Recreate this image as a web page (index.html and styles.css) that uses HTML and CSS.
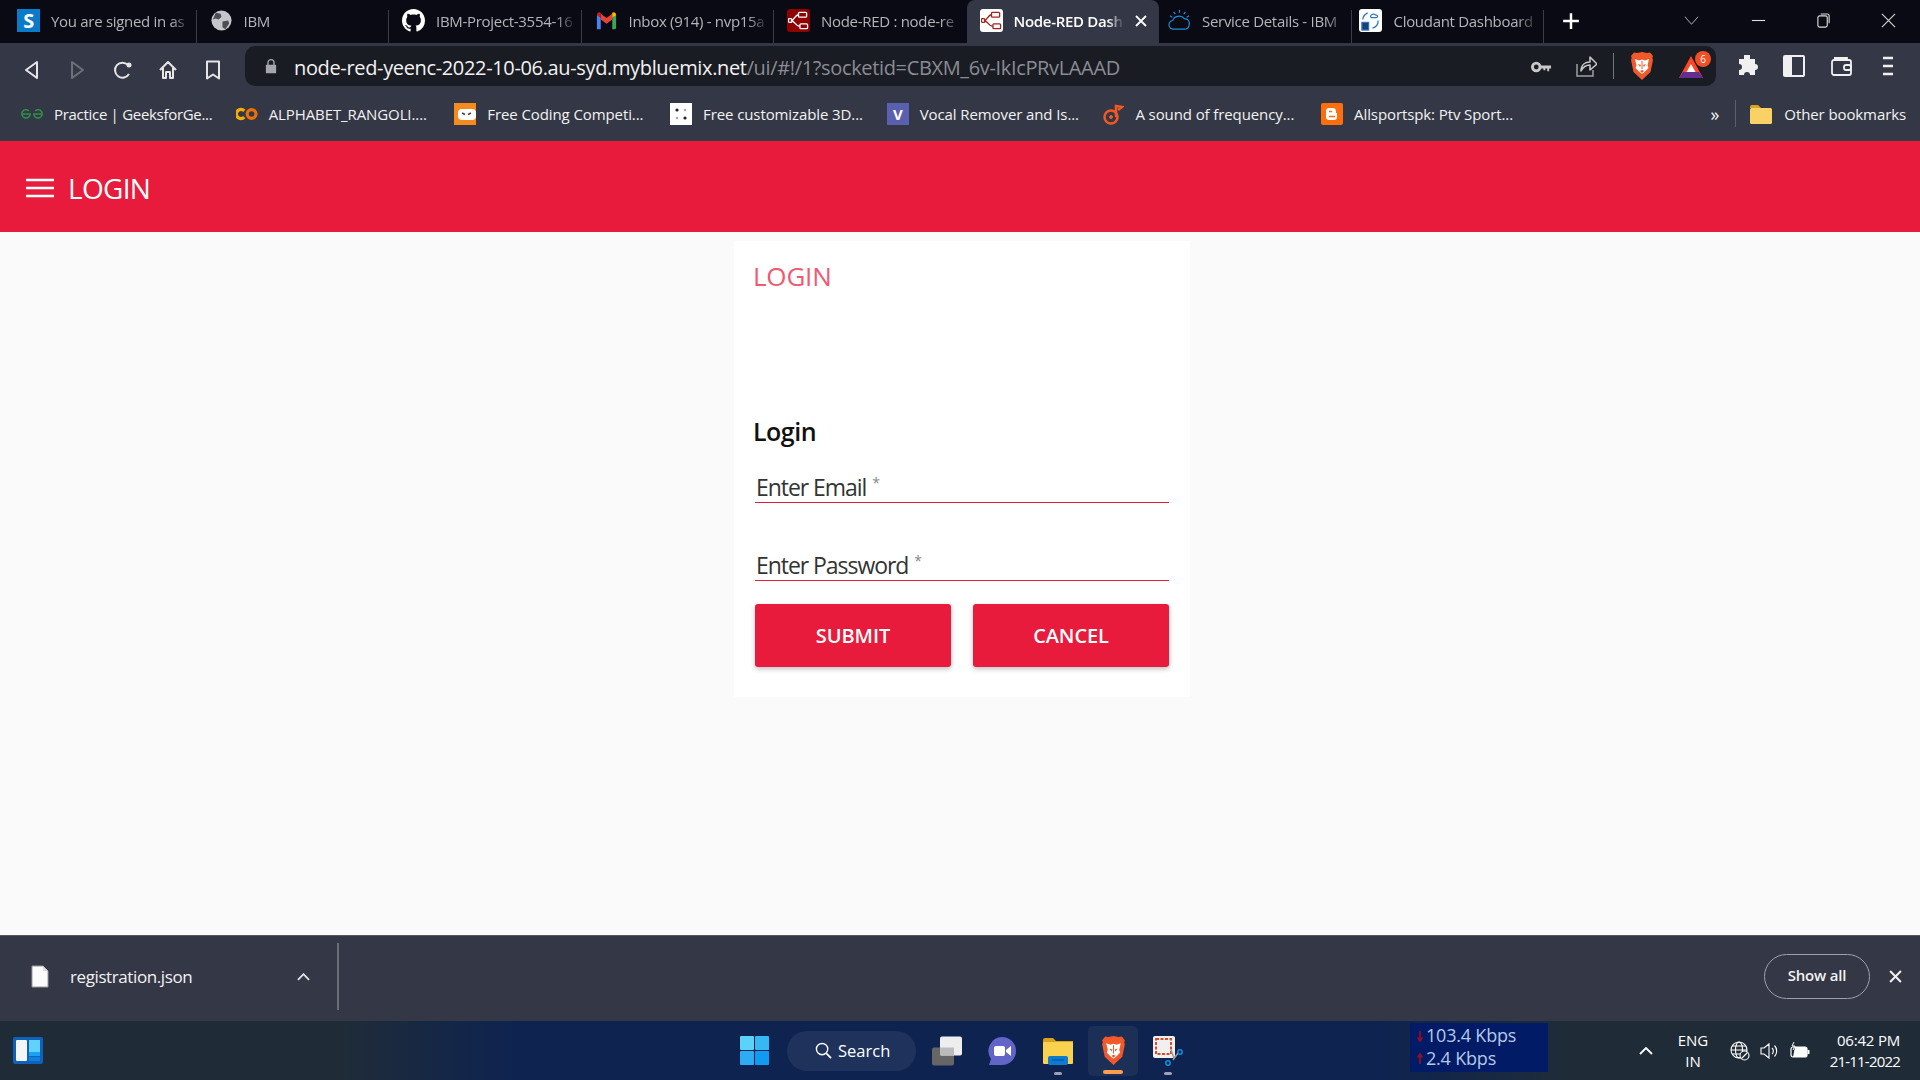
FILE: index.html

```html
<!DOCTYPE html>
<html lang="en">
<head>
<meta charset="UTF-8">
<title>Node-RED Dashboard</title>
<link rel="stylesheet" href="styles.css">
</head>
<body>

<svg class="defs" width="0" height="0">
  <symbol id="flow" viewBox="0 0 22 22">
    <path d="M3 11c4 0 4-6 8-6M3 11c4 0 5 6 9 6" fill="none" stroke="currentColor" stroke-width="1.400"/>
    <rect x="11" y="2.500" width="8.500" height="5" rx="1" fill="none" stroke="currentColor" stroke-width="1.400"/>
    <rect x="12.500" y="14.500" width="8" height="5" rx="1" fill="none" stroke="currentColor" stroke-width="1.400"/>
    <rect x="0.500" y="9" width="3.500" height="4" rx="1" fill="none" stroke="currentColor" stroke-width="1.400"/>
  </symbol>
  <symbol id="brave" viewBox="0 0 24 28">
    <path d="M12 0l5 1 3-.5 3 3.500-.7 2 .7 2-2.500 12L12 28l-8.500-8-2.500-12 .7-2L1 4 4 .5 7 1z" fill="#f1592a"/>
    <path d="M5 7l4 1.500 3-1 3 1L19 7l-1.500 6.500 1 2.500-4 4-2.500 2-2.500-2-4-4 1-2.500z" fill="#fff"/>
    <path d="M8 12l3 1-1 2zM16 12l-3 1 1 2zM10 19l2-1 2 1-2 2zM11.500 9h1v8h-1z" fill="#f1592a"/>
  </symbol>
</svg>

<div class="tabstrip">
  <div class="tab">
    <span class="favicon fav-s">S</span>
    <span class="tab-title">You are signed in as</span>
  </div>
  <div class="tab">
    <svg class="favicon" viewBox="0 0 24 24"><circle cx="12" cy="12" r="10.500" fill="#c4c6cb"/><path d="M6 4l5 1 1 3-3 3-3-1-3 1zM13 13l6-1 1 3-4 6-3-2z" fill="#4b4d55"/></svg>
    <span class="tab-title">IBM</span>
  </div>
  <div class="tab">
    <svg class="favicon" viewBox="0 0 16 16"><path fill="#fff" d="M8 0C3.58 0 0 3.58 0 8c0 3.54 2.29 6.53 5.47 7.59.4.07.55-.17.55-.38 0-.19-.01-.82-.01-1.49-2.01.37-2.53-.49-2.69-.94-.09-.23-.48-.94-.82-1.13-.28-.15-.68-.52-.01-.53.63-.01 1.08.58 1.23.82.72 1.21 1.87.87 2.33.66.07-.52.28-.87.51-1.07-1.78-.2-3.64-.89-3.64-3.95 0-.87.31-1.59.82-2.15-.08-.2-.36-1.02.08-2.12 0 0 .67-.21 2.2.82.64-.18 1.32-.27 2-.27.68 0 1.36.09 2 .27 1.53-1.04 2.2-.82 2.2-.82.44 1.1.16 1.92.08 2.12.51.56.82 1.27.82 2.15 0 3.07-1.87 3.75-3.65 3.95.29.25.54.73.54 1.48 0 1.07-.01 1.93-.01 2.2 0 .21.15.46.55.38A8.013 8.013 0 0016 8c0-4.42-3.58-8-8-8z"/></svg>
    <span class="tab-title">IBM-Project-3554-16</span>
  </div>
  <div class="tab">
    <svg class="favicon" viewBox="0 0 24 24"><path d="M2 21V6l4 3v12H3.500A1.500 1.500 0 012 21z" fill="#4285f4"/><path d="M22 21V6l-4 3v12h2.500a1.500 1.500 0 001.500-1.500z" fill="#34a853"/><path d="M6 11V5l6 4.500L18 5v6l-6 4.500z" fill="#ea4335"/><path d="M2 6.500C2 3.500 4.500 2.500 6 4l0 5z" fill="#c5221f"/><path d="M22 6.500c0-3-2.500-4-4-2.500l0 5z" fill="#fbbc04"/></svg>
    <span class="tab-title">Inbox (914) - nvp15a</span>
  </div>
  <div class="tab">
    <span class="favicon fav-red"><svg viewBox="0 0 22 22"><use href="#flow"/></svg></span>
    <span class="tab-title">Node-RED : node-re</span>
  </div>
  <div class="tab tab-active">
    <span class="favicon fav-white"><svg viewBox="0 0 22 22"><use href="#flow"/></svg></span>
    <span class="tab-title">Node-RED Dash</span>
    <svg class="tab-close" viewBox="0 0 12 12"><path d="M1 1l10 10M11 1L1 11" stroke="#fff" stroke-width="1.800"/></svg>
  </div>
  <div class="tab">
    <svg class="favicon" viewBox="0 0 24 24" fill="none" stroke="#1f8fd6" stroke-width="1.200"><path d="M6 21a4.500 4.500 0 01-1-9c1-5 9-6 12-2 4 0 6 3 5 7-.5 2.500-2.500 4-5 4z"/><path d="M12 1v3M6 3l1.500 2.500M18 3l-1.500 2.500M2 7l2.500 1.500M22 7l-2.500 1.500"/></svg>
    <span class="tab-title">Service Details - IBM</span>
  </div>
  <div class="tab tab-last">
    <span class="favicon fav-white fav-cloudant"><svg viewBox="0 0 22 22" fill="none" stroke="#2d74c4" stroke-width="1.300"><path d="M11 7a3 3 0 015-2c3 0 3 3 1 3h-5z"/><path d="M8 3C4 5 3 8 3 10M19 11c0 4-2 7-6 8"/><rect x="2" y="13" width="7" height="8" fill="#1c3f78"/></svg></span>
    <span class="tab-title">Cloudant Dashboard</span>
  </div>
  <svg class="new-tab" viewBox="0 0 16 16"><path d="M8 1v14M1 8h14" stroke="#fff" stroke-width="2.200"/></svg>
  <div class="win-btns">
    <svg class="win-chev" viewBox="0 0 16 16"><path d="M1 4l7 8 7-8" fill="none" stroke="#bbb" stroke-width="1"/></svg>
    <svg viewBox="0 0 16 16"><path d="M1 8h14" stroke="#ddd" stroke-width="1.200"/></svg>
    <svg viewBox="0 0 16 16"><rect x="2" y="3" width="10" height="12" rx="2" fill="none" stroke="#ddd" stroke-width="1.200"/><path d="M5 1h7a2 2 0 012 2v8" fill="none" stroke="#ddd" stroke-width="1.200"/></svg>
    <svg viewBox="0 0 16 16"><path d="M1 1l14 14M15 1L1 15" stroke="#ddd" stroke-width="1.100"/></svg>
  </div>
</div>

<div class="toolbar">
  <div class="nav-btns">
    <svg viewBox="0 0 20 20"><path d="M15 2v16L4 10z" fill="none" stroke="#e6e6e6" stroke-width="2" stroke-linejoin="round"/></svg>
    <svg viewBox="0 0 20 20"><path d="M5 2v16l11-8z" fill="none" stroke="#6d707a" stroke-width="2" stroke-linejoin="round"/></svg>
    <svg viewBox="0 0 20 20"><path d="M16 14a7.500 7.500 0 11-1-9" fill="none" stroke="#e6e6e6" stroke-width="2"/><circle cx="16" cy="5" r="2.500" fill="#e6e6e6"/></svg>
    <svg viewBox="0 0 20 20"><path d="M2 10l8-8 8 8M5 8v10h3v-6h4v6h3V8" fill="none" stroke="#e6e6e6" stroke-width="2" stroke-linejoin="round"/></svg>
    <svg viewBox="0 0 20 20"><path d="M4 1.500h12v17l-6-4-6 4z" fill="none" stroke="#e6e6e6" stroke-width="2" stroke-linejoin="round"/></svg>
  </div>
  <div class="omnibox">
    <svg class="lock" viewBox="0 0 14 18"><path d="M3.500 8V5a3.500 3.500 0 017 0v3" fill="none" stroke="#a5a7ac" stroke-width="1.600"/><rect x="1" y="7.500" width="12" height="10" rx="1" fill="#a5a7ac"/></svg>
    <span class="url">node-red-yeenc-2022-10-06.au-syd.mybluemix.net<span class="url-rest">/ui/#!/1?socketid=CBXM_6v-IkIcPRvLAAAD</span></span>
    <div class="omni-icons">
      <svg class="ic-key" viewBox="0 0 22 14"><circle cx="5.500" cy="7" r="4" fill="none" stroke="#c9c9c9" stroke-width="3"/><path d="M9 5.500h12v3h-2v3h-2v-3h-2v2h-2v-2H9z" fill="#c9c9c9"/></svg>
      <svg class="ic-share" viewBox="0 0 22 24"><path d="M2 10v12h16v-6" fill="none" stroke="#9d9fa5" stroke-width="1.500"/><path d="M6 17c0-6 4-9 9-9V3l7 7-7 6v-5c-4 0-7 2-9 6z" fill="none" stroke="#c9c9c9" stroke-width="1.500" stroke-linejoin="round"/></svg>
      <span class="omni-sep"></span>
      <svg class="ic-brave"><use href="#brave"/></svg>
      <span class="bat">
        <svg viewBox="0 0 26 26"><path d="M13 3L1 25h24z" fill="#ff4724"/><path d="M1 25l4-6h16l4 6z" fill="#662d91"/><path d="M13 11l-4.500 8h9z" fill="#fff"/></svg>
        <span class="bat-badge">6</span>
      </span>
    </div>
  </div>
  <div class="tool-icons">
    <svg viewBox="0 0 22 22"><path d="M8 2a3 3 0 016 0v3h5v5a3 3 0 010 6v5h-5a3 3 0 00-6 0H3v-5a3 3 0 000-6V5h5z" fill="#f0f0f0" transform="translate(0 -1)"/></svg>
    <svg viewBox="0 0 22 22"><rect x="1" y="1" width="20" height="20" rx="1" fill="none" stroke="#f0f0f0" stroke-width="2"/><rect x="1" y="1" width="8" height="20" fill="#f0f0f0"/></svg>
    <svg viewBox="0 0 22 22"><path d="M4 3h13v3M2 7a2 2 0 012-2h15a2 2 0 012 2v11a2 2 0 01-2 2H4a2 2 0 01-2-2z" fill="none" stroke="#f0f0f0" stroke-width="1.800"/><rect x="14" y="10" width="7" height="5" rx="2" fill="none" stroke="#f0f0f0" stroke-width="1.800"/></svg>
    <svg viewBox="0 0 22 22"><path d="M6 3h10M6 11h10M6 19h10" stroke="#f0f0f0" stroke-width="2.400"/></svg>
  </div>
</div>

<div class="bookmarks">
  <div class="bm bm-1">
    <svg viewBox="0 0 24 14" fill="none" stroke="#2f8d46" stroke-width="1.800"><path d="M1 7h9a4.500 4.500 0 11-1.500-3.500M23 7h-9a4.500 4.500 0 101.500-3.500"/></svg>
    <span>Practice | GeeksforGe...</span>
  </div>
  <div class="bm bm-2">
    <svg viewBox="0 0 24 14" fill="none" stroke-width="3.500"><path d="M9 3.500a5 5 0 100 7" stroke="#f9ab00"/><circle cx="17" cy="7" r="4.800" stroke="#e8710a"/></svg>
    <span>ALPHABET_RANGOLI....</span>
  </div>
  <div class="bm bm-3">
    <svg viewBox="0 0 22 22"><rect width="22" height="22" fill="#f58a1f"/><rect x="4" y="6" width="18" height="11" rx="4" fill="#fff"/><path d="M8 10l3 1.500M17 10l-3 1.500" stroke="#444" stroke-width="1.500"/></svg>
    <span>Free Coding Competi...</span>
  </div>
  <div class="bm bm-4">
    <svg viewBox="0 0 22 22"><rect width="22" height="22" fill="#fff"/><circle cx="7" cy="7" r="1.600" fill="#222"/><circle cx="15" cy="7" r="1.300" fill="#aaa"/><circle cx="7" cy="15" r="1.300" fill="#aaa"/><circle cx="15" cy="15" r="1.600" fill="#222"/></svg>
    <span>Free customizable 3D...</span>
  </div>
  <div class="bm bm-5">
    <span class="fav-v">V</span>
    <span>Vocal Remover and Is...</span>
  </div>
  <div class="bm bm-6">
    <svg viewBox="0 0 22 22" fill="none" stroke="#ef5a24" stroke-width="2.500"><circle cx="9" cy="14" r="6.500"/><circle cx="9" cy="14" r="1.500" fill="#ef5a24" stroke-width="1"/><path d="M14 14V3l6 1-4 3"/></svg>
    <span>A sound of frequency...</span>
  </div>
  <div class="bm bm-7">
    <svg viewBox="0 0 22 22"><rect width="22" height="22" rx="2" fill="#ff6e0c"/><path d="M8 5h4c2 0 3 1.500 3 4v1c1 0 1 .5 1 1v3c0 2-1 3-3 3H8c-2 0-3-1-3-3V8c0-2 1-3 3-3z" fill="#fff"/><path d="M8 8.500h3M8 13.500h6" stroke="#ff6e0c" stroke-width="1.500"/></svg>
    <span>Allsportspk: Ptv Sport...</span>
  </div>
  <span class="bm-more">»</span>
  <span class="bm-sep"></span>
  <div class="bm bm-other">
    <svg viewBox="0 0 22 20"><path d="M0 3a2 2 0 012-2h6l3 3H0z" fill="#d9a520"/><rect y="4" width="22" height="16" rx="1.500" fill="#fad165"/></svg>
    <span>Other bookmarks</span>
  </div>
</div>

<header class="ui-header">
  <svg class="hamburger" viewBox="0 0 28 20"><path d="M0 2h28M0 10h28M0 18h28" stroke="#fff" stroke-width="2.600"/></svg>
  <span class="ui-title">LOGIN</span>
</header>

<main class="ui-content">
  <section class="card">
    <h3 class="card-title">LOGIN</h3>
    <form class="login-form">
      <h4 class="form-title">Login</h4>
      <div class="field"><span class="field-label">Enter Email</span><span class="req">*</span></div>
      <div class="field"><span class="field-label">Enter Password</span><span class="req">*</span></div>
      <div class="form-btns">
        <button type="button" class="btn">SUBMIT</button>
        <button type="button" class="btn">CANCEL</button>
      </div>
    </form>
  </section>
</main>

<div class="downloads">
  <svg class="dl-file" viewBox="0 0 18 23"><path d="M1 1h11l5 5v16H1z" fill="#fbfbfb" stroke="#999" stroke-width="1"/><path d="M12 1v5h5" fill="#ddd"/></svg>
  <span class="dl-name">registration.json</span>
  <svg class="dl-chev" viewBox="0 0 14 8"><path d="M1 7l6-6 6 6" fill="none" stroke="#e2e2e2" stroke-width="2"/></svg>
  <span class="dl-sep"></span>
  <span class="show-all">Show all</span>
  <svg class="dl-close" viewBox="0 0 12 12"><path d="M1 1l10 10M11 1L1 11" stroke="#f0f0f0" stroke-width="1.900"/></svg>
</div>

<footer class="taskbar">
  <svg class="widgets" viewBox="0 0 30 27"><rect width="30" height="27" rx="2" fill="#0f62b8"/><rect x="3" y="3" width="11" height="21" rx="1" fill="#f3f5f7"/><rect x="16" y="3" width="11" height="12" fill="#62d1ff"/><rect x="16" y="15" width="11" height="4" fill="#1ba1f2"/><rect x="16" y="20" width="11" height="4" fill="#0f7fe0"/></svg>
  <div class="task-center">
    <svg class="ti-start" viewBox="0 0 29 29"><rect width="14" height="14" rx="1" fill="#5bd2f8"/><rect x="15" width="14" height="14" rx="1" fill="#36b8f5"/><rect y="15" width="14" height="14" rx="1" fill="#2cacf3"/><rect x="15" y="15" width="14" height="14" rx="1" fill="#119bf0"/></svg>
    <div class="search-pill">
      <svg viewBox="0 0 18 18"><circle cx="7.500" cy="7.500" r="6" fill="none" stroke="#fff" stroke-width="1.500"/><path d="M12 12l5 5" stroke="#fff" stroke-width="1.800"/></svg>
      <span>Search</span>
    </div>
    <svg class="ti ti-view" viewBox="0 0 30 29"><rect y="11" width="22" height="18" rx="2" fill="#666"/><rect x="8" width="22" height="19" rx="2" fill="#eee"/><rect x="8" y="11" width="14" height="8" fill="#bbb"/></svg>
    <svg class="ti ti-meet" viewBox="0 0 30 30"><path d="M15 1a14 14 0 110 28H2l2-6A14 14 0 0115 1z" fill="#6264c8"/><rect x="7" y="10" width="11" height="10" rx="2" fill="#fff"/><path d="M19 14l5-4v10l-5-4z" fill="#fff"/></svg>
    <div class="ti-wrap">
      <svg class="ti" viewBox="0 0 30 28"><path d="M0 3a2 2 0 012-2h8l3 3h17v4H0z" fill="#dba21c"/><rect y="5" width="30" height="22" rx="1" fill="#fbd24e"/><rect x="5" y="19" width="20" height="9" rx="2" fill="#0f7bd0"/><path d="M9 23h12" stroke="#0a4f8f" stroke-width="1"/></svg>
      <span class="run-dot"></span>
    </div>
    <div class="ti-active">
      <svg class="ti-brave"><use href="#brave"/></svg>
      <span class="run-bar"></span>
    </div>
    <div class="ti-wrap">
      <svg class="ti" viewBox="0 0 30 30"><rect x="0" y="0" width="22" height="22" rx="2" fill="#f0f0f0"/><rect x="3" y="3" width="15" height="15" fill="none" stroke="#e0492a" stroke-width="2" stroke-dasharray="3 1.500"/><path d="M18 14l3 8M20 24l5-7" stroke="#999" stroke-width="1.500"/><circle cx="15" cy="27" r="2.200" fill="none" stroke="#0f8fe0" stroke-width="1.500"/><circle cx="27" cy="16" r="2.200" fill="none" stroke="#0f8fe0" stroke-width="1.500"/></svg>
      <span class="run-dot"></span>
    </div>
  </div>
  <div class="netspeed">
    <span class="net-row"><svg viewBox="0 0 8 12"><path d="M4 1v9M1.500 7.500L4 11l2.500-3.500" fill="none" stroke="#8c1028" stroke-width="1.800"/></svg>103.4 Kbps</span>
    <span class="net-row"><svg viewBox="0 0 8 12"><path d="M4 11V2M1.500 4.500L4 1l2.500 3.500" fill="none" stroke="#8c1028" stroke-width="1.800"/></svg>2.4 Kbps</span>
  </div>
  <svg class="tray-chev" viewBox="0 0 14 8"><path d="M1 7l6-6 6 6" fill="none" stroke="#fff" stroke-width="1.800"/></svg>
  <div class="lang"><span>ENG</span><span>IN</span></div>
  <div class="tray-icons">
    <svg viewBox="0 0 20 20" fill="none" stroke="#fff" stroke-width="1.100"><circle cx="9" cy="9" r="8"/><ellipse cx="9" cy="9" rx="3.500" ry="8"/><path d="M1 9h16M2 5h14M2 13h14"/><circle cx="14.500" cy="14.500" r="4.500" fill="#1f2c38"/><path d="M11.500 17.500l6-6"/></svg>
    <svg viewBox="0 0 20 20" fill="none" stroke="#fff" stroke-width="1.100"><path d="M1 7h3l5-4v14l-5-4H1zM12 7a4 4 0 010 6M14.500 4.500a8 8 0 010 11"/></svg>
    <svg viewBox="0 0 20 20"><rect x="1" y="6" width="16" height="10" rx="2" fill="none" stroke="#fff" stroke-width="1.200"/><path d="M5 6h11a1 1 0 011 1v8a1 1 0 01-1 1H3z" fill="#fff"/><rect x="17.500" y="9" width="2" height="4" fill="#fff"/><path d="M4 1L2 5h3L3 9" fill="none" stroke="#fff" stroke-width="1"/></svg>
  </div>
  <div class="clock"><span>06:42 PM</span><span class="clock-date">21-11-2022</span></div>
</footer>

</body>
</html>
```

FILE: styles.css

```css
* {
  box-sizing: border-box;
}

html, body {
  margin: 0;
  height: 100%;
  overflow: hidden;
}

body {
  width: 1920px;
  height: 1080px;
  display: flex;
  flex-direction: column;
  font-family: "Open Sans", "Noto Sans", sans-serif;
  background: #fafafa;
}

.defs {
  position: absolute;
}

svg {
  display: block;
  flex: none;
}

/* tab strip */
.tabstrip {
  height: 43px;
  display: flex;
  padding-left: 4px;
  background: #0a0a14;
}

.tab {
  width: 192.5px;
  height: 43px;
  display: flex;
  align-items: center;
  gap: 11px;
  padding: 0 5px 2px 13px;
  color: #b4b5ba;
  font-size: 15px;
  letter-spacing: -0.3px;
  position: relative;
}

.tab::after {
  content: "";
  position: absolute;
  right: 0;
  top: 10px;
  height: 33px;
  width: 1px;
  background: #3a3c47;
}

.tab-active {
  background: #343745;
  border-radius: 8px 8px 0 0;
  color: #fff;
  font-weight: 600;
}

.tab-active ~ .tab {
  padding-left: 9px;
  gap: 11px;
}

.tab-active ~ .tab-last {
  padding-left: 7px;
  gap: 12px;
}

.tab-active::after,
.tab:nth-child(5)::after {
  display: none;
}

.tab-title {
  flex: 1;
  white-space: nowrap;
  overflow: hidden;
  -webkit-mask-image: linear-gradient(to right, #000 85%, transparent);
  mask-image: linear-gradient(to right, #000 85%, transparent);
}

.favicon {
  width: 23px;
  height: 23px;
  flex: none;
  display: flex;
  align-items: center;
  justify-content: center;
}

.favicon svg {
  width: 21px;
  height: 21px;
}

.fav-s {
  background: #0a7bc8;
  color: #fff;
  font-size: 20px;
  font-weight: 700;
}

.fav-red {
  background: #8f0000;
  color: #fff;
  border-radius: 3px;
}

.fav-white {
  background: #fff;
  color: #a52020;
  border-radius: 3px;
}

.tab-close {
  width: 12px;
  height: 12px;
  margin-right: 7px;
}

.new-tab {
  width: 18px;
  height: 18px;
  margin: 12px 0 0 18px;
}

.win-btns {
  margin-left: auto;
  display: flex;
  align-items: center;
  gap: 50px;
  padding: 0 24px 2px 0;
}

.win-btns svg {
  width: 15px;
  height: 15px;
}

.win-chev {
  margin-right: 2px;
}

/* toolbar */
.toolbar {
  height: 53px;
  display: flex;
  align-items: center;
  background: #343745;
}

.nav-btns {
  width: 245px;
  display: flex;
  align-items: center;
  gap: 25.3px;
  padding-left: 22px;
}

.nav-btns svg {
  width: 20px;
  height: 20px;
}

.omnibox {
  width: 1471px;
  height: 40px;
  margin-top: -8px;
  display: flex;
  align-items: center;
  background: #1a1c24;
  border-radius: 10px;
  padding-left: 20px;
}

.lock {
  width: 12px;
  height: 16px;
}

.url {
  margin: 3px 0 0 17px;
  font-size: 20px;
  letter-spacing: -0.35px;
  color: #f2f2f2;
  white-space: nowrap;
}

.url-rest {
  color: #8a8c93;
}

.omni-icons {
  margin-left: auto;
  display: flex;
  align-items: center;
}

.ic-key {
  width: 21px;
  height: 14px;
  margin: 2px 23px 0 0;
}

.ic-share {
  width: 22px;
  height: 24px;
  margin-right: 16px;
}

.omni-sep {
  width: 1px;
  height: 26px;
  background: #74767d;
  margin-right: 16px;
}

.ic-brave {
  width: 24px;
  height: 28px;
  margin-right: 24px;
}

.bat {
  position: relative;
  width: 26px;
  height: 26px;
  margin-right: 12px;
}

.bat svg {
  width: 26px;
  height: 26px;
}

.bat-badge {
  position: absolute;
  top: -2px;
  right: -7px;
  width: 16px;
  height: 16px;
  border-radius: 50%;
  background: #f14f26;
  color: #fff;
  font-size: 10px;
  line-height: 16px;
  text-align: center;
}

.tool-icons {
  display: flex;
  align-items: center;
  gap: 25px;
  padding-left: 20px;
  margin-top: -8px;
}

.tool-icons svg {
  width: 22px;
  height: 22px;
}

/* bookmarks */
.bookmarks {
  height: 45px;
  display: flex;
  align-items: center;
  padding: 0 14px 10px 21px;
  background: #343745;
  color: #f2f2f2;
  font-size: 15px;
  letter-spacing: -0.1px;
}

.bm {
  display: flex;
  align-items: center;
  gap: 11px;
  white-space: nowrap;
}

.bm svg {
  width: 22px;
  height: 22px;
}

.bm-1 svg,
.bm-2 svg {
  height: 14px;
}

.bm-1 {
  width: 215px;
  letter-spacing: -0.3px;
}

.bm-2 { width: 219px; }
.bm-3 { width: 216px; }
.bm-4 { width: 217px; }
.bm-5 { width: 216px; }
.bm-6 { width: 219px; }
.bm-7 { width: 390px; }

.fav-v {
  width: 22px;
  height: 22px;
  background: #5a5fb0;
  color: #fff;
  font-weight: 700;
  text-align: center;
  line-height: 22px;
}

.bm-more {
  font-size: 18px;
}

.bm-sep {
  width: 1px;
  height: 27px;
  margin: 0 14px 0 16px;
  background: #5c5e68;
}

.bm-other {
  gap: 12px;
}

/* dashboard page */
.ui-header {
  height: 91px;
  display: flex;
  align-items: center;
  padding: 3px 0 0 26px;
  background: #e91b3c;
  color: #fff;
}

.hamburger {
  width: 28px;
  height: 20px;
}

.ui-title {
  margin: -1px 0 0 14px;
  font-size: 28px;
  letter-spacing: -0.7px;
}

.ui-content {
  flex: 1;
  display: flex;
  justify-content: center;
  padding: 9px 0 0 4px;
  background: #fafafa;
}

.card {
  width: 456px;
  height: 456px;
  padding: 0 21px 0 19px;
  background: #fff;
}

.card-title {
  margin: 17px 0 0;
  font-size: 26px;
  font-weight: 500;
  line-height: 36px;
  letter-spacing: -0.2px;
  color: #ef5a73;
}

.form-title {
  margin: 119px 0 0;
  font-size: 25px;
  font-weight: 600;
  line-height: 36px;
  letter-spacing: -0.5px;
  color: #111;
}

.field {
  height: 78px;
  margin-left: 2px;
  display: flex;
  align-items: flex-end;
  padding: 0 1px;
  border-bottom: 1px solid #e91b3c;
  color: #333;
  font-size: 23px;
  letter-spacing: -1.05px;
  line-height: 30px;
}

.login-form .field:first-of-type {
  height: 45px;
  margin-top: 9px;
}

.req {
  margin: 0 0 11px 6px;
  font-size: 14px;
  line-height: 16px;
  color: #888;
}

.form-btns {
  margin: 23px 0 0 2px;
  display: flex;
  gap: 22px;
}

.btn {
  width: 196px;
  height: 63px;
  border: none;
  border-radius: 3px;
  background: #e91b3c;
  color: #fff;
  font-family: inherit;
  font-size: 20px;
  font-weight: 600;
  letter-spacing: -0.1px;
  box-shadow: 0 2px 5px rgba(0, 0, 0, 0.26);
}

/* download shelf */
.downloads {
  height: 86px;
  display: flex;
  align-items: center;
  padding: 0 0 4px 31px;
  background: #343745;
  border-top: 1px solid #555862;
  color: #f2f2f2;
}

.dl-file {
  width: 18px;
  height: 23px;
}

.dl-name {
  width: 227px;
  margin-left: 21px;
  font-size: 17px;
  letter-spacing: -0.4px;
}

.dl-chev {
  width: 13px;
  height: 8px;
}

.dl-sep {
  width: 2px;
  height: 67px;
  margin-left: 27px;
  background: #6b6e78;
}

.show-all {
  margin-left: auto;
  width: 106px;
  height: 45px;
  border: 1px solid #9fa1a8;
  border-radius: 23px;
  font-size: 15px;
  font-weight: 600;
  letter-spacing: -0.2px;
  line-height: 41px;
  text-align: center;
}

.dl-close {
  width: 13px;
  height: 13px;
  margin: 0 18px 0 19px;
}

/* windows taskbar */
.taskbar {
  height: 59px;
  display: flex;
  align-items: center;
  padding-left: 13px;
  background: linear-gradient(to right, #1f2c38 0, #1f2c38 340px, #0e2350 520px, #0e2350 1380px, #1f2c38 1570px);
  color: #fff;
}

.widgets {
  width: 30px;
  height: 27px;
}

.task-center {
  margin-left: 697px;
  display: flex;
  align-items: center;
}

.ti-start {
  width: 29px;
  height: 29px;
}

.search-pill {
  width: 129px;
  height: 40px;
  margin-left: 18px;
  display: flex;
  align-items: center;
  padding-left: 28px;
  gap: 6px;
  border-radius: 20px;
  background: #1e325c;
  font-size: 16.5px;
}

.search-pill svg {
  width: 17px;
  height: 17px;
}

.ti {
  width: 30px;
  height: 30px;
}

.ti-view {
  margin-left: 16px;
}

.ti-meet {
  margin-left: 25px;
}

.ti-wrap {
  position: relative;
  margin-left: 26px;
}

.ti-active {
  position: relative;
  width: 50px;
  height: 50px;
  margin-left: 15px;
  display: flex;
  align-items: center;
  justify-content: center;
  background: #1c2f57;
  border-radius: 5px;
}

.ti-active + .ti-wrap {
  margin-left: 15px;
}

.ti-brave {
  width: 25px;
  height: 29px;
}

.run-dot {
  position: absolute;
  left: 11px;
  bottom: -9px;
  width: 8px;
  height: 3px;
  border-radius: 2px;
  background: #9aa3b5;
}

.run-bar {
  position: absolute;
  left: 15px;
  bottom: 2px;
  width: 20px;
  height: 4px;
  border-radius: 2px;
  background: #ff9d4f;
}

.netspeed {
  width: 138px;
  height: 49px;
  margin: -7px 0 0 227px;
  padding-left: 6px;
  display: flex;
  flex-direction: column;
  justify-content: center;
  background: #011b66;
  color: #b5c9e8;
  font-size: 18px;
  letter-spacing: -0.2px;
}

.net-row {
  height: 23px;
  line-height: 23px;
  display: flex;
  align-items: center;
  gap: 2px;
}

.net-row svg {
  width: 8px;
  height: 12px;
}

.tray-chev {
  width: 14px;
  height: 8px;
  margin-left: 91px;
}

.lang {
  width: 60px;
  margin-left: 10px;
  display: flex;
  flex-direction: column;
  align-items: center;
  font-size: 15px;
  line-height: 21px;
}

.tray-icons {
  display: flex;
  gap: 10px;
  margin-left: 7px;
}

.tray-icons svg {
  width: 20px;
  height: 20px;
}

.clock {
  margin-left: auto;
  padding-right: 20px;
  display: flex;
  flex-direction: column;
  align-items: flex-end;
  font-size: 15px;
  line-height: 21px;
  letter-spacing: -0.2px;
}

.clock-date {
  letter-spacing: -0.8px;
}
```
